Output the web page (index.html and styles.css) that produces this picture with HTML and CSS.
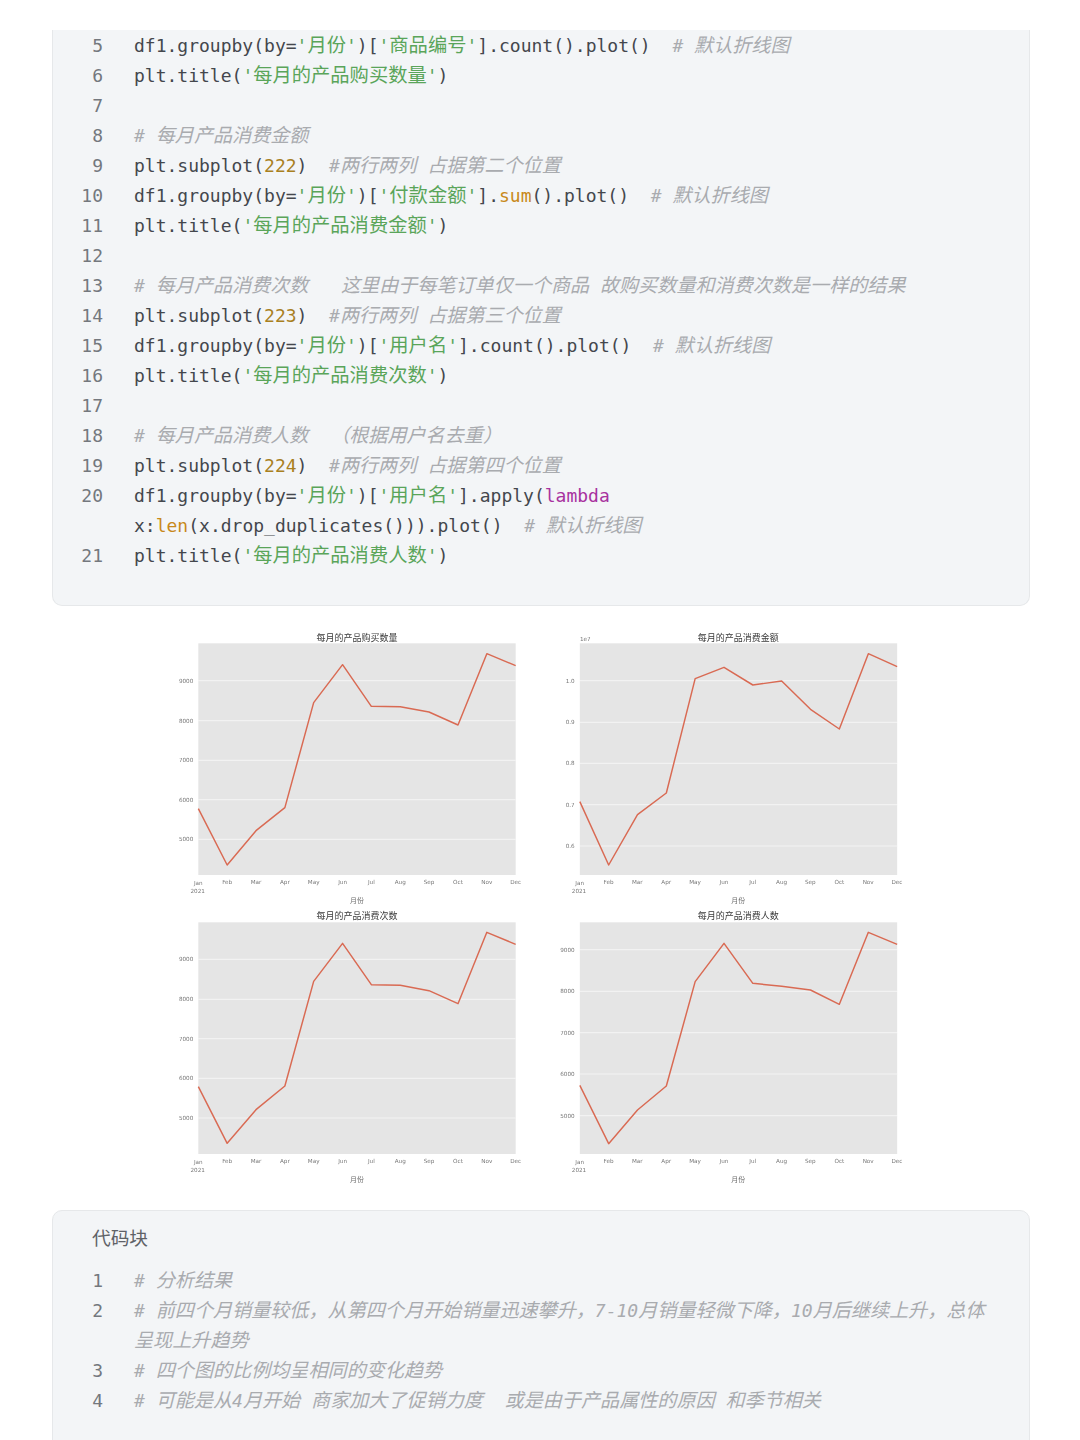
FILE: index.html
```html
<!DOCTYPE html>
<html lang="zh">
<head>
<meta charset="utf-8">
<title>代码块</title>
<link rel="stylesheet" href="styles.css">
</head>
<body>
<main class="page">
<section class="card card-top">
<div class="ln"><span class="n">5</span><code>df1.groupby(by=<span class="s">'<span class="z">月份</span>'</span>)[<span class="s">'<span class="z">商品编号</span>'</span>].count().plot()  <span class="c"># <span class="z">默认折线图</span></span></code></div>
<div class="ln"><span class="n">6</span><code>plt.title(<span class="s">'<span class="z">每月的产品购买数量</span>'</span>)</code></div>
<div class="ln"><span class="n">7</span><code></code></div>
<div class="ln"><span class="n">8</span><code><span class="c"># <span class="z">每月产品消费金额</span></span></code></div>
<div class="ln"><span class="n">9</span><code>plt.subplot(<span class="m">222</span>)  <span class="c">#<span class="z">两行两列</span> <span class="z">占据第二个位置</span></span></code></div>
<div class="ln"><span class="n">10</span><code>df1.groupby(by=<span class="s">'<span class="z">月份</span>'</span>)[<span class="s">'<span class="z">付款金额</span>'</span>].<span class="b">sum</span>().plot()  <span class="c"># <span class="z">默认折线图</span></span></code></div>
<div class="ln"><span class="n">11</span><code>plt.title(<span class="s">'<span class="z">每月的产品消费金额</span>'</span>)</code></div>
<div class="ln"><span class="n">12</span><code></code></div>
<div class="ln"><span class="n">13</span><code><span class="c"># <span class="z">每月产品消费次数</span>   <span class="z">这里由于每笔订单仅一个商品</span> <span class="z">故购买数量和消费次数是一样的结果</span></span></code></div>
<div class="ln"><span class="n">14</span><code>plt.subplot(<span class="m">223</span>)  <span class="c">#<span class="z">两行两列</span> <span class="z">占据第三个位置</span></span></code></div>
<div class="ln"><span class="n">15</span><code>df1.groupby(by=<span class="s">'<span class="z">月份</span>'</span>)[<span class="s">'<span class="z">用户名</span>'</span>].count().plot()  <span class="c"># <span class="z">默认折线图</span></span></code></div>
<div class="ln"><span class="n">16</span><code>plt.title(<span class="s">'<span class="z">每月的产品消费次数</span>'</span>)</code></div>
<div class="ln"><span class="n">17</span><code></code></div>
<div class="ln"><span class="n">18</span><code><span class="c"># <span class="z">每月产品消费人数</span>  <span class="z">（根据用户名去重）</span></span></code></div>
<div class="ln"><span class="n">19</span><code>plt.subplot(<span class="m">224</span>)  <span class="c">#<span class="z">两行两列</span> <span class="z">占据第四个位置</span></span></code></div>
<div class="ln"><span class="n">20</span><code>df1.groupby(by=<span class="s">'<span class="z">月份</span>'</span>)[<span class="s">'<span class="z">用户名</span>'</span>].apply(<span class="k">lambda</span>
x:<span class="b">len</span>(x.drop_duplicates())).plot()  <span class="c"># <span class="z">默认折线图</span></span></code></div>
<div class="ln"><span class="n">21</span><code>plt.title(<span class="s">'<span class="z">每月的产品消费人数</span>'</span>)</code></div>
</section>

<figure class="charts">
<svg class="chart" viewBox="0 0 1140 864" role="img">
<rect class="plot" x="115" y="70" width="952" height="695"/>
<path class="grid" d="M115 182H1067M115 302H1067M115 421H1067M115 539H1067M115 658H1067"/>
<polyline class="line" points="115,566 201.5,735 288,632 374.6,563 461,248 547.7,134 634,259 720.8,260 807,276 894,315 980.5,101 1067,137"/>
<text class="title" x="591" y="62">每月的产品购买数量</text>
<g class="yt"><text x="100" y="188">9000</text><text x="100" y="308">8000</text><text x="100" y="427">7000</text><text x="100" y="545">6000</text><text x="100" y="664">5000</text></g>
<g class="xt"><text x="115" y="795">Jan</text><text x="201.5" y="792">Feb</text><text x="288" y="792">Mar</text><text x="374.6" y="792">Apr</text><text x="461" y="792">May</text><text x="547.7" y="792">Jun</text><text x="634" y="792">Jul</text><text x="720.8" y="792">Aug</text><text x="807" y="792">Sep</text><text x="894" y="792">Oct</text><text x="980.5" y="792">Nov</text><text x="1067" y="792">Dec</text><text x="113" y="820">2021</text></g>
<text class="xl" x="591" y="849">月份</text>
</svg>
<svg class="chart" viewBox="0 0 1140 864" role="img">
<rect class="plot" x="89.5" y="70" width="952" height="695"/>
<path class="grid" d="M89.5 182H1041.5M89.5 307H1041.5M89.5 430H1041.5M89.5 554H1041.5M89.5 678H1041.5"/>
<polyline class="line" points="89.5,545 176,735 262.5,584 349,519 435.5,176 522,142 608.5,195 695,183 781.5,268 868,327 955,101 1041.5,140"/>
<text class="title" x="565" y="62">每月的产品消费金额</text>
<text class="yt-e" x="90" y="64">1e7</text>
<g class="yt"><text x="74" y="188">1.0</text><text x="74" y="313">0.9</text><text x="74" y="436">0.8</text><text x="74" y="560">0.7</text><text x="74" y="684">0.6</text></g>
<g class="xt"><text x="89" y="795">Jan</text><text x="175.5" y="792">Feb</text><text x="262" y="792">Mar</text><text x="348.6" y="792">Apr</text><text x="435" y="792">May</text><text x="521.7" y="792">Jun</text><text x="608" y="792">Jul</text><text x="694.8" y="792">Aug</text><text x="781" y="792">Sep</text><text x="868" y="792">Oct</text><text x="954.5" y="792">Nov</text><text x="1041" y="792">Dec</text><text x="87" y="820">2021</text></g>
<text class="xl" x="565" y="849">月份</text>
</svg>
<svg class="chart chart-low" viewBox="0 24 1140 876" role="img">
<rect class="plot" x="115" y="67" width="952" height="695"/>
<path class="grid" d="M115 178H1067M115 298H1067M115 416H1067M115 535H1067M115 654H1067"/>
<polyline class="line" points="115,560 201.5,730 288,629 374.6,558 461,244 547.7,130 634,254 720.8,256 807,272 894,311 980.5,97 1067,133"/>
<text class="title" x="591" y="57">每月的产品消费次数</text>
<g class="yt"><text x="100" y="184">9000</text><text x="100" y="304">8000</text><text x="100" y="422">7000</text><text x="100" y="541">6000</text><text x="100" y="660">5000</text></g>
<g class="xt"><text x="115" y="791">Jan</text><text x="201.5" y="788">Feb</text><text x="288" y="788">Mar</text><text x="374.6" y="788">Apr</text><text x="461" y="788">May</text><text x="547.7" y="788">Jun</text><text x="634" y="788">Jul</text><text x="720.8" y="788">Aug</text><text x="807" y="788">Sep</text><text x="894" y="788">Oct</text><text x="980.5" y="788">Nov</text><text x="1067" y="788">Dec</text><text x="113" y="816">2021</text></g>
<text class="xl" x="591" y="846">月份</text>
</svg>
<svg class="chart chart-low" viewBox="0 24 1140 876" role="img">
<rect class="plot" x="89.5" y="67" width="952" height="695"/>
<path class="grid" d="M89.5 149H1041.5M89.5 274H1041.5M89.5 398H1041.5M89.5 522H1041.5M89.5 647H1041.5"/>
<polyline class="line" points="89.5,556 176,731 262.5,630 349,558 435.5,245 522,130 608.5,250 695,259 781.5,270 868,313 955,97 1041.5,133"/>
<text class="title" x="565" y="57">每月的产品消费人数</text>
<g class="yt"><text x="74" y="155">9000</text><text x="74" y="280">8000</text><text x="74" y="404">7000</text><text x="74" y="528">6000</text><text x="74" y="653">5000</text></g>
<g class="xt"><text x="89" y="791">Jan</text><text x="175.5" y="788">Feb</text><text x="262" y="788">Mar</text><text x="348.6" y="788">Apr</text><text x="435" y="788">May</text><text x="521.7" y="788">Jun</text><text x="608" y="788">Jul</text><text x="694.8" y="788">Aug</text><text x="781" y="788">Sep</text><text x="868" y="788">Oct</text><text x="954.5" y="788">Nov</text><text x="1041" y="788">Dec</text><text x="87" y="816">2021</text></g>
<text class="xl" x="565" y="846">月份</text>
</svg>
</figure>

<section class="card card-bottom">
<div class="label">代码块</div>
<div class="ln"><span class="n">1</span><code><span class="c"># <span class="z">分析结果</span></span></code></div>
<div class="ln"><span class="n">2</span><code><span class="c"># <span class="z">前四个月销量较低，从第四个月开始销量迅速攀升，</span>7-10<span class="z">月销量轻微下降，</span>10<span class="z">月后继续上升，总体呈现上升趋势</span></span></code></div>
<div class="ln"><span class="n">3</span><code><span class="c"># <span class="z">四个图的比例均呈相同的变化趋势</span></span></code></div>
<div class="ln"><span class="n">4</span><code><span class="c"># <span class="z">可能是从</span>4<span class="z">月开始</span> <span class="z">商家加大了促销力度</span>  <span class="z">或是由于产品属性的原因</span> <span class="z">和季节相关</span></span></code></div>
</section>
</main>
</body>
</html>
```
FILE: styles.css
```css
html, body {
  margin: 0;
  background: #fff;
}
.page {
  height: 1440px;
  overflow: hidden;
  box-sizing: border-box;
  padding: 30px 50px 0 52px;
  font-family: "DejaVu Sans Mono", "Noto Sans CJK SC", monospace;
  font-size: 18px;
  color: #44474d;
}
.card {
  background: #f3f5f7;
  box-sizing: border-box;
  border: 1px solid #e6e8ea;
  border-radius: 10px;
}
.card-top {
  border-top: 0;
  border-radius: 0 0 10px 10px;
  padding-top: 1px;
  padding-bottom: 34px;
}
.card-bottom {
  margin-top: 10px;
  padding: 12px 0 36px;
}
.label {
  font-family: "Noto Sans CJK SC", sans-serif;
  font-size: 18.7px;
  line-height: 27px;
  color: #5f6267;
  padding-left: 39px;
  margin-bottom: 16px;
}
.ln {
  display: grid;
  grid-template-columns: 50px 1fr;
  column-gap: 31px;
  padding-right: 41px;
  line-height: 30px;
  min-height: 30px;
}
.n {
  text-align: right;
  color: #74787e;
}
code {
  font: inherit;
  white-space: pre-wrap;
  overflow-wrap: anywhere;
}
.z {
  font-family: "Noto Sans CJK SC", sans-serif;
  font-size: 19.1px;
  line-height: 1;
}
.s { color: #5aa55a; }
.s .z { font-size: 19.3px; }
.c { color: #a9abaf; font-style: italic; }
.m { color: #a9801f; }
.b { color: #c8891a; }
.k { color: #a8329f; }
.charts {
  margin: 14px 0 0 108px;
  display: grid;
  grid-template-columns: 380px 380px;
  column-gap: 10px;
  grid-template-rows: 288px 292px;
}
.chart {
  display: block;
  width: 380px;
  height: 288px;
  font-family: "DejaVu Sans", sans-serif;
  filter: blur(0.3px);
}
.chart-low {
  height: 292px;
}
.plot { fill: #e5e5e5; }
.grid { stroke: #fafafa; stroke-width: 2.2; fill: none; }
.line { stroke: #d96a53; stroke-width: 4.4; fill: none; stroke-linejoin: round; }
.title {
  font-family: "Noto Sans CJK SC", sans-serif;
  font-size: 27px;
  fill: #3a3a3a;
  text-anchor: middle;
}
.xl {
  font-family: "Noto Sans CJK SC", sans-serif;
  font-size: 21px;
  fill: #707070;
  text-anchor: middle;
}
.yt text { font-size: 17px; fill: #777; text-anchor: end; }
.xt text { font-size: 17px; fill: #777; text-anchor: middle; }
.yt-e { font-size: 17px; fill: #777; }
```
